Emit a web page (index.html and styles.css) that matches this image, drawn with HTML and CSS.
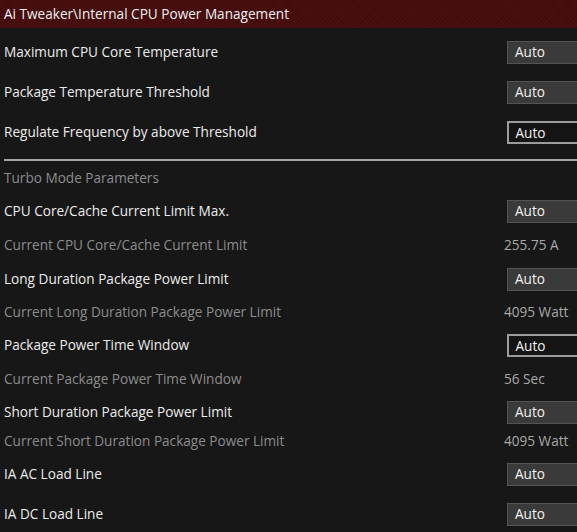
FILE: index.html
```html
<!DOCTYPE html>
<html>
<head>
<meta charset="utf-8">
<link rel="stylesheet" href="styles.css">
</head>
<body>
<div class="page">
  <div class="header">Ai Tweaker\Internal CPU Power Management</div>
  <div class="list">
    <div class="row h40"><span class="label">Maximum CPU Core Temperature</span><div class="select">Auto</div></div>
    <div class="row h40"><span class="label">Package Temperature Threshold</span><div class="select">Auto</div></div>
    <div class="row h40"><span class="label">Regulate Frequency by above Threshold</span><div class="select active">Auto</div></div>
    <div class="sep"></div>
    <div class="row h34"><span class="label dim">Turbo Mode Parameters</span></div>
    <div class="row h33"><span class="label">CPU Core/Cache Current Limit Max.</span><div class="select">Auto</div></div>
    <div class="row h34"><span class="label dim">Current CPU Core/Cache Current Limit</span><span class="value">255.75 A</span></div>
    <div class="row h34"><span class="label">Long Duration Package Power Limit</span><div class="select">Auto</div></div>
    <div class="row h32"><span class="label dim">Current Long Duration Package Power Limit</span><span class="value">4095 Watt</span></div>
    <div class="row h34"><span class="label">Package Power Time Window</span><div class="select active">Auto</div></div>
    <div class="row h34"><span class="label dim">Current Package Power Time Window</span><span class="value">56 Sec</span></div>
    <div class="row h32"><span class="label">Short Duration Package Power Limit</span><div class="select">Auto</div></div>
    <div class="row h26"><span class="label dim">Current Short Duration Package Power Limit</span><span class="value">4095 Watt</span></div>
    <div class="row h40"><span class="label">IA AC Load Line</span><div class="select">Auto</div></div>
    <div class="row h40"><span class="label">IA DC Load Line</span><div class="select">Auto</div></div>
  </div>
</div>
</body>
</html>
```
FILE: styles.css
```css
html, body {
  margin: 0;
  padding: 0;
  background: #171717;
  overflow: hidden;
}
.page {
  width: 577px;
  height: 532px;
  font-family: "Open Sans", "DejaVu Sans", sans-serif;
  font-size: 13.6px;
  color: #ececec;
  background: #171717;
  overflow: hidden;
}
.header {
  height: 28px;
  line-height: 27px;
  padding-left: 4px;
  background-color: #4c0f0f;
  background-image:
    repeating-linear-gradient(45deg, rgba(0,0,0,0.10) 0 1px, transparent 1px 3px),
    repeating-linear-gradient(-45deg, rgba(0,0,0,0.10) 0 1px, transparent 1px 3px);
  color: #f0f0f0;
  white-space: nowrap;
}
.list {
  padding-top: 4px;
}
.row {
  display: flex;
  align-items: center;
  padding-left: 4px;
  white-space: nowrap;
}
.h40 { height: 40px; }
.h34 { height: 34px; }
.h33 { height: 33px; }
.h32 { height: 32px; }
.h26 { height: 26px; }
.label {
  flex: 1;
  margin-top: -2px;
}
.label.dim {
  color: #8c8c8c;
}
.value {
  width: 73px;
  color: #a8a8a8;
  margin-top: -2px;
}
.select {
  width: 110px;
  height: 23px;
  box-sizing: border-box;
  margin-right: -40px;
  padding-left: 7px;
  line-height: 20px;
  background: #3a3a3a;
  border: 1.5px solid #545454;
  color: #f2f2f2;
}
.select.active {
  background: #141414;
  border: 2px solid #9c9c9c;
  line-height: 19px;
  padding-left: 6.5px;
}
.sep {
  height: 2px;
  margin: 7px 0 0 4px;
  background: #a6a6a6;
}
```
